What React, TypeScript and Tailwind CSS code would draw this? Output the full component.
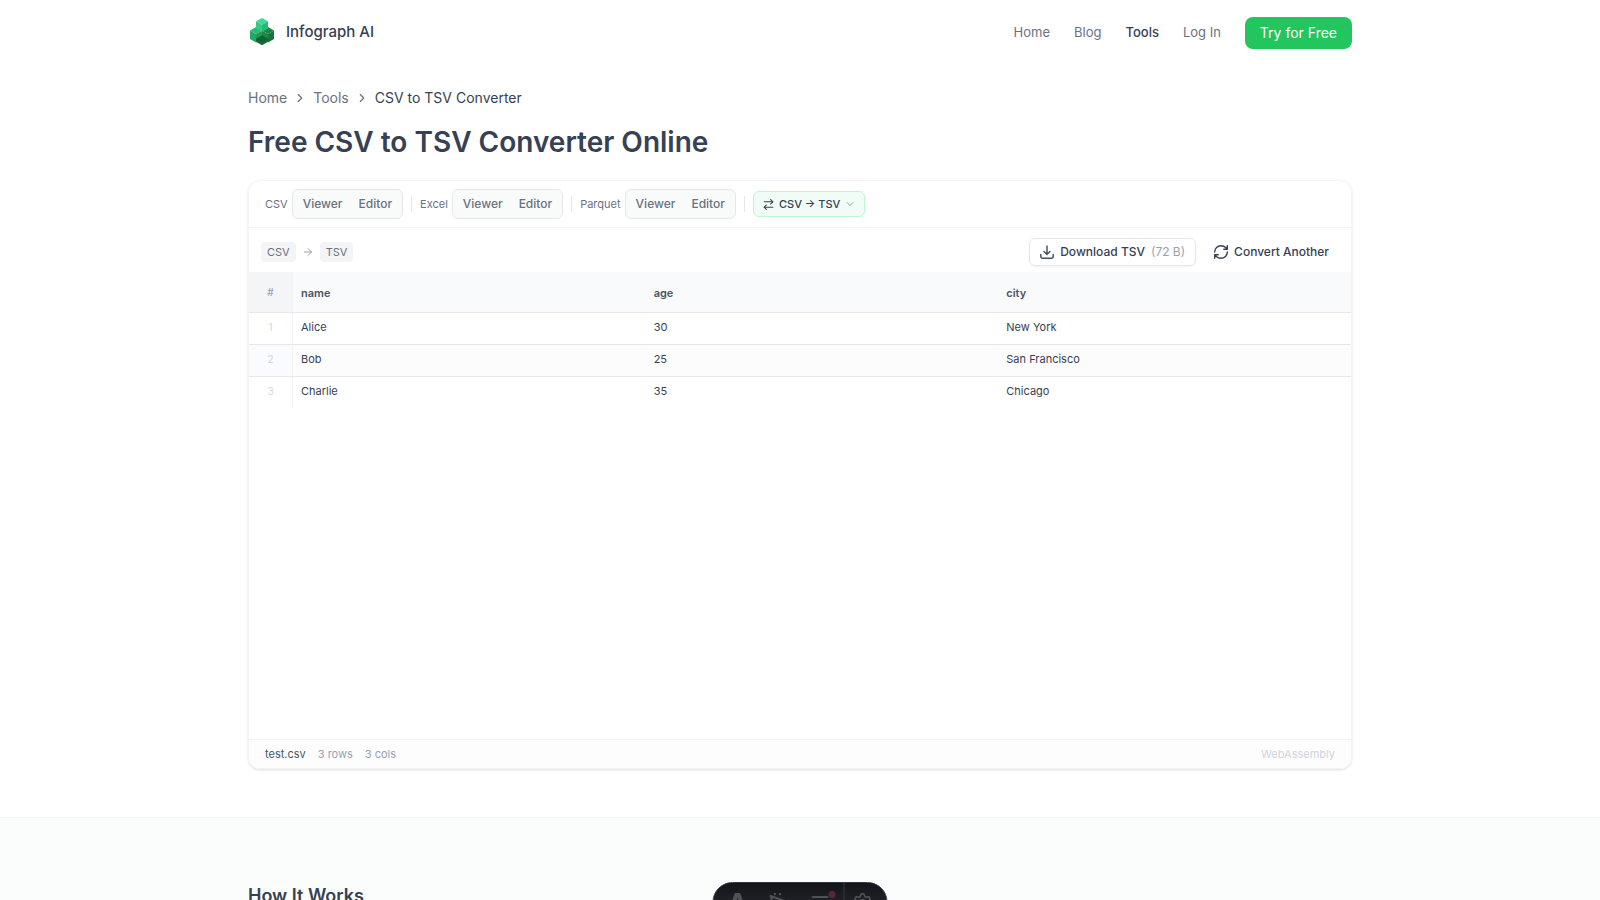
import React from 'react';
import { ArrowRight, ArrowRightLeft, ChevronDown, ChevronRight, Settings } from 'lucide-react';

const navLinks = ['Home', 'Blog', 'Tools', 'Log In'];
const formats = ['CSV', 'Excel', 'Parquet'];
const columns = ['name', 'age', 'city'];
const rows = [
  ['Alice', '30', 'New York'],
  ['Bob', '25', 'San Francisco'],
  ['Charlie', '35', 'Chicago'],
];

const Header: React.FC = () => (
  <header className="mx-auto flex h-16 w-full max-w-6xl items-center justify-between px-6">
    <a href="#" className="flex items-center gap-2.5 text-[15px] font-medium">
      <Logo />
      Infograph AI
    </a>
    <nav className="flex items-center gap-6 pt-px text-[13px]">
      {navLinks.map((link) => (
        <a key={link} href="#" className={link === 'Tools' ? 'font-medium' : 'text-gray-500'}>
          {link}
        </a>
      ))}
      <a href="#" className="flex h-8 items-center rounded-lg bg-[#22c55e] px-[15px] text-sm text-white">
        Try for Free
      </a>
    </nav>
  </header>
);

// Three stacked isometric cubes
const Logo: React.FC = () => (
  <svg width="28" height="32" viewBox="0 0 28 32">
    <path d="M2 14.5l6 3.500v8.500l-6-3.500z" fill="#25a768" />
    <path d="M8 11l6 3.500L8 18l-6-3.500z" fill="#2bb974" />
    <path d="M8 18l6-3.500v8L8 26.500z" fill="#1f9a58" />
    <path d="M20 11l6 3.500L20 18l-6-3.500z" fill="#188544" />
    <path d="M14 14.500l6 3.500v8.500l-6-4z" fill="#178a48" />
    <path d="M26 14.500v8.500l-6 3.500V18z" fill="#15753a" />
    <path d="M14 19.500l6 3.500v2.700L14 29.200 8 25.700V23z" fill="#186a39" />
    <path d="M14 19.500l6 3.500-6 3.500L8 23z" fill="#166034" />
    <path d="M14 2l6 3.300-6 3.500-6-3.500z" fill="#3fd996" />
    <path d="M8 5.300l6 3.500V16l-6-3.500z" fill="#34c985" />
    <path d="M20 5.300l-6 3.500V16l6-3.500z" fill="#27b873" />
  </svg>
);

const FormatBar: React.FC = () => (
  <div className="flex h-[47px] items-center gap-2 border-b border-gray-100 px-4 text-xs text-gray-500">
    {formats.map((format) => (
      <React.Fragment key={format}>
        <div className="flex items-center gap-1">
          <span className="text-[11px]">{format}</span>
          <div className="flex h-[30px] items-center rounded-md border border-gray-200 bg-[#f9fbfa] p-0.5 font-medium">
            <button className="px-2">Viewer</button>
            <button className="px-2">Editor</button>
          </div>
        </div>
        <div className="h-4 w-px bg-gray-200" />
      </React.Fragment>
    ))}
    <button className="flex h-[26px] items-center gap-1 rounded-md border border-[#bbf7d0] bg-[#f2fcf6] px-2 text-[11px] font-medium text-gray-700">
      <ArrowRightLeft size={13} />
      CSV → TSV
      <ChevronDown size={12} className="text-gray-400" />
    </button>
  </div>
);

const ResultBar: React.FC = () => (
  <div className="flex items-center justify-between px-3 pt-2.5 pb-1.5 text-xs">
    <div className="flex items-center gap-1.5 text-[11px] text-gray-500">
      <span className="rounded bg-gray-100 px-1.5 leading-5">CSV</span>
      <ArrowRight size={12} className="text-gray-400" />
      <span className="rounded bg-gray-100 px-1.5 leading-5">TSV</span>
    </div>
    <div className="flex items-center gap-2 font-medium">
      <button className="flex h-7 items-center gap-1.5 rounded-md border border-gray-200 px-2.5 shadow-xs">
        <DownloadIcon />
        Download TSV
        <span className="font-normal text-gray-400">(72 B)</span>
      </button>
      <button className="flex h-7 items-center gap-1.5 px-2.5">
        <RefreshIcon />
        Convert Another
      </button>
    </div>
  </div>
);

const DownloadIcon: React.FC = () => (
  <svg width="14" height="14" viewBox="1 1 14 14" fill="none" stroke="#4b5563" strokeWidth="1.500" strokeLinecap="round" strokeLinejoin="round">
    <path d="M8 2v8M5 7.500l3 3 3-3M1.800 10.500v1.700a2 2 0 0 0 2 2h8.400a2 2 0 0 0 2-2v-1.700" />
  </svg>
);

const RefreshIcon: React.FC = () => (
  <svg width="14" height="14" viewBox="2 2 20 20" fill="none" stroke="currentColor" strokeWidth="2" strokeLinecap="round" strokeLinejoin="round">
    <path d="M3 12a9 9 0 0 1 9-9 9.750 9.750 0 0 1 6.740 2.740L21 8M21 3v5h-5M21 12a9 9 0 0 1-9 9 9.750 9.750 0 0 1-6.740-2.740L3 16M8 16H3v5" />
  </svg>
);

const DataTable: React.FC = () => (
  <table className="w-full table-fixed border-separate border-spacing-0 text-left text-[11px]">
    <thead>
      <tr className="bg-[#f8fafc]">
        <th className="h-[41px] w-11 border-r border-b border-r-gray-100 border-b-gray-200 bg-[#f4f5f7] text-center text-[10px] font-medium text-gray-400">#</th>
        {columns.map((column) => (
          <th key={column} className="border-b border-gray-200 px-2 pt-0.5 font-semibold text-gray-600">{column}</th>
        ))}
      </tr>
    </thead>
    <tbody>
      {rows.map((row, i) => (
        <tr key={row[0]} className="group even:bg-[#fcfcfd]">
          <td className="h-8 border-r border-b border-r-gray-100 border-b-gray-200 pb-0.5 text-center text-[10px] text-gray-300 group-last:border-b-transparent group-even:bg-[#fafbfe]">{i + 1}</td>
          {row.map((cell) => (
            <td key={cell} className="border-r border-b border-r-[#fcfcfd] border-b-gray-200 px-2 pb-0.5 group-last:border-b-transparent last:border-r-0">{cell}</td>
          ))}
        </tr>
      ))}
    </tbody>
  </table>
);

const DevToolbar: React.FC = () => (
  <div className="fixed -bottom-[22px] left-1/2 flex h-10 -translate-x-1/2 overflow-hidden rounded-full border border-[#343841] bg-linear-to-b from-[#13151a] to-[#302c36] text-[#505157]">
    <button aria-label="Menu" className="flex w-11 items-center justify-center pl-1">
      <svg width="16" height="18" viewBox="0 0 16 18" fill="currentColor">
        <path d="M6 0h4q.8 0 1.100 1L15 13.500q-2-1-5-1.500L8 4.500 6 12q-3 .500-5 1.500L4.900 1Q5.200 0 6 0zM4 13.500q4 2 8 0 0 3-4 4.500-4-1.500-4-4.500z" />
      </svg>
    </button>
    <button aria-label="Inspect" className="flex w-10 items-center justify-center">
      <svg width="18" height="18" viewBox="0 0 18 18" fill="none" stroke="currentColor" strokeWidth="2" strokeLinejoin="round">
        <path d="M2 3l14 5-6 2-3 6zM7 2L6 0M11 2l1-2M1 8l-1 1" />
      </svg>
    </button>
    <button aria-label="Audit" className="relative flex w-[46px] items-center justify-center">
      <svg width="18" height="14" viewBox="0 0 18 14" fill="none" stroke="currentColor" strokeWidth="2" strokeLinecap="round">
        <path d="M1 2h15M1 7h8M1 12h6M11 10l2 2 4-6" />
      </svg>
      <span className="absolute top-2 right-2 size-[7px] rounded-full bg-[#55283a]" />
    </button>
    <button aria-label="Settings" className="flex w-[43px] items-center justify-center border-l border-[#343841] pr-1.5">
      <Settings size={20} />
    </button>
  </div>
);

const App: React.FC = () => (
  <div className="h-screen overflow-hidden bg-white font-['Inter',sans-serif] text-gray-700">
    <Header />
    <main>
      <div className="mx-auto w-full max-w-6xl px-6 pt-6 pb-12">
        <nav aria-label="Breadcrumb" className="flex items-center gap-1.5 text-sm leading-5 text-gray-500">
          <a href="#">Home</a>
          <ChevronRight size={14} />
          <a href="#">Tools</a>
          <ChevronRight size={14} />
          <span className="text-gray-700">CSV to TSV Converter</span>
        </nav>
        <h1 className="mt-4 mb-5 text-[28px] leading-9 font-semibold">Free CSV to TSV Converter Online</h1>
        <section className="flex flex-col overflow-hidden rounded-xl border border-gray-100 shadow-sm">
          <FormatBar />
          <ResultBar />
          <div className="h-[467px]">
            <DataTable />
          </div>
          <footer className="flex h-[29px] items-center gap-3 border-t border-gray-100 bg-[#fdfdfd] px-4 text-[11px] text-gray-400">
            <span className="text-gray-600">test.csv</span>
            <span>3 rows</span>
            <span>3 cols</span>
            <span className="ml-auto text-gray-300">WebAssembly</span>
          </footer>
        </section>
      </div>
      <section className="border-t border-gray-100 bg-[#fbfdfc] py-16">
        <h2 className="mx-auto max-w-6xl px-6 text-lg leading-7 font-semibold">How It Works</h2>
      </section>
    </main>
    <DevToolbar />
  </div>
);

export default App;
